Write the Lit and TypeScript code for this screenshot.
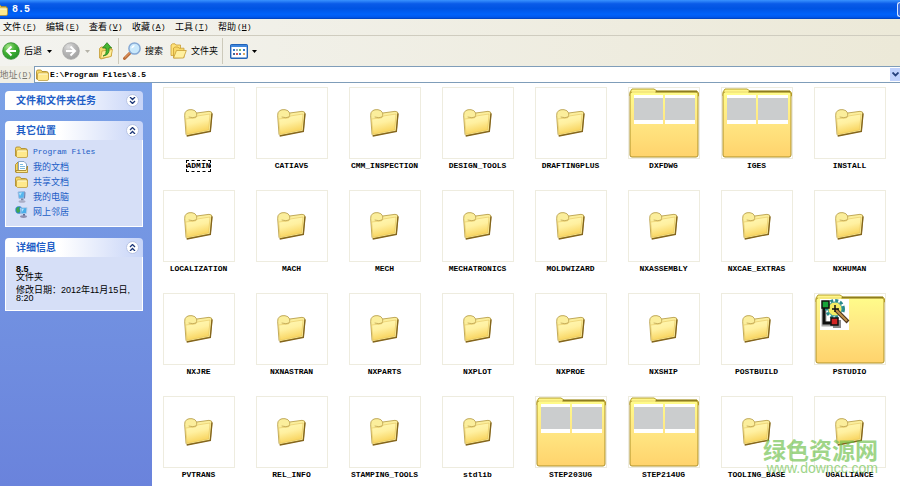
import { LitElement, html, css, svg, nothing } from "lit";
import { customElement, property } from "lit/decorators.js";

type Kind = "plain" | "preview" | "studio";
interface Folder { name: string; kind?: Kind; selected?: boolean }

const FOLDERS: Folder[] = [
  { name: "ADMIN", selected: true }, { name: "CATIAV5" }, { name: "CMM_INSPECTION" }, { name: "DESIGN_TOOLS" },
  { name: "DRAFTINGPLUS" }, { name: "DXFDWG", kind: "preview" }, { name: "IGES", kind: "preview" }, { name: "INSTALL" },
  { name: "LOCALIZATION" }, { name: "MACH" }, { name: "MECH" }, { name: "MECHATRONICS" },
  { name: "MOLDWIZARD" }, { name: "NXASSEMBLY" }, { name: "NXCAE_EXTRAS" }, { name: "NXHUMAN" },
  { name: "NXJRE" }, { name: "NXNASTRAN" }, { name: "NXPARTS" }, { name: "NXPLOT" },
  { name: "NXPROE" }, { name: "NXSHIP" }, { name: "POSTBUILD" }, { name: "PSTUDIO", kind: "studio" },
  { name: "PVTRANS" }, { name: "REL_INFO" }, { name: "STAMPING_TOOLS" }, { name: "stdlib" },
  { name: "STEP203UG", kind: "preview" }, { name: "STEP214UG", kind: "preview" }, { name: "TOOLING_BASE" }, { name: "UGALLIANCE" },
];

const MENUS = [["文件", "F"], ["编辑", "E"], ["查看", "V"], ["收藏", "A"], ["工具", "T"], ["帮助", "H"]];

const smallFolder = html`<svg width="13" height="12" viewBox="0 0 13 12" aria-hidden="true">
  <path d="M.5 10V2.5Q.5 1 2 1H4.500Q5.500 1 6 2.500H10.500Q12 2.500 12 4V10.500H1.500Z" fill="#f4d766" stroke="#a88420" stroke-width=".8"/>
  <path d="M1.500 10.500V5Q1.500 4 3 4H12.500V10Q12.500 11.500 11 11.500H2.500Z" fill="#ffe98c" stroke="#b8922c" stroke-width=".7"/>
  <path d="M2.500 5H11.500" stroke="#fffbd8"/></svg>`;

const docsIcon = html`<svg width="13" height="12" viewBox="0 0 13 12" aria-hidden="true">
  <path d="M.5 11V3.500L3 1V11Z" fill="#f4d766" stroke="#a88420" stroke-width=".8"/>
  <path d="M3.500.5H9L11.500 3V9.500H3.500Z" fill="#fff" stroke="#6d93bd" stroke-width=".8"/>
  <path d="M5 3.500H8M5 5.500H10M5 7.500H10" stroke="#6fb2dd" stroke-width=".9"/>
  <path d="M1 11.500V9.500H11L12.500 5V11.500Z" fill="#ffe98c" stroke="#a88420" stroke-width=".8"/></svg>`;

const computerIcon = html`<svg width="13" height="12" viewBox="0 0 13 12" aria-hidden="true">
  <path d="M3 1L9.500.5L9 7L4 7.500Z" fill="#54b6ef" stroke="#9fb7dc" stroke-width=".9"/>
  <path d="M4 2L7 1.500L5 5Z" fill="#b4e4fc"/>
  <path d="M9.500.5L10.500 1.500L10 8L9 7Z" fill="#6a7fae"/>
  <path d="M6 7.500H8.500V9.500H6Z" fill="#7e88a8"/><ellipse cx="7" cy="10.500" rx="3.500" ry="1.300" fill="#a9adc6"/></svg>`;

const networkIcon = html`<svg width="13" height="12" viewBox="0 0 13 12" aria-hidden="true">
  <circle cx="4" cy="4" r="3.700" fill="#2f86d4"/><path d="M1 3Q2 .5 5 .8L4 3L5.500 5L3 7Q1 6 1 3Z" fill="#3fa653"/>
  <path d="M5.500 2L12 1.500L11.500 7.500L6 8Z" fill="#4aaeea" stroke="#b8cce8" stroke-width=".9"/>
  <path d="M6.500 3L9 2.700L7 6Z" fill="#b4e4fc"/><path d="M8 8H10V10H8Z" fill="#5f6c99"/>
  <ellipse cx="8.500" cy="10.600" rx="3.500" ry="1.300" fill="#8d8fb0"/></svg>`;

const arrow = (dir: "left" | "right") => {
  const left = dir === "left";
  const id = `orb-${dir}`;
  return html`<svg width="18" height="18" viewBox="0 0 18 18" aria-hidden="true">
    <defs><radialGradient id=${id} cx=".35" cy=".25" r=".8">
      <stop offset="0" stop-color=${left ? "#a5e58c" : "#dedede"}/><stop offset=".5" stop-color=${left ? "#43b134" : "#b6b6b6"}/>
      <stop offset="1" stop-color=${left ? "#22902a" : "#a0a0a0"}/></radialGradient></defs>
    <circle cx="9" cy="9" r="8.300" fill="url(#${id})" stroke=${left ? "#2b8a29" : "#a4a4a4"} stroke-width=".8"/>
    <path d=${left ? "M14 9H5M9.500 4.500L5 9L9.500 13.500" : "M4 9H13M8.500 4.500L13 9L8.500 13.500"} fill="none" stroke="#fff" stroke-width="2"/></svg>`;
};

const upIcon = html`<svg width="16" height="18" viewBox="0 0 16 18" aria-hidden="true">
  <path d="M1.500 16V6.500L3 5H6L7 6.500L13.500 5.500V14L3 17Z" fill="#f5d568" stroke="#c39a34" stroke-width=".8"/>
  <path d="M2.500 16.500L4 9L14.500 7.500L13 14.500Z" fill="#ffee9a" stroke="#c9a13a" stroke-width=".8"/>
  <path d="M5 14Q9 13 8 6H4.500L9 .7L13.500 6H11Q12 13 5 14Z" fill="#46b733" stroke="#23801c" stroke-width=".8"/></svg>`;

const searchIcon = html`<svg width="18" height="18" viewBox="0 0 18 18" aria-hidden="true">
  <path d="M7.500 10.500L1.500 16.500" stroke="#b96a35" stroke-width="3" stroke-linecap="round"/>
  <path d="M7 10.500L1.800 15.700" stroke="#f0a870" stroke-width="1"/>
  <circle cx="11.500" cy="6.500" r="5.600" fill="#c9e8fb" stroke="#86a9d4" stroke-width="1.500"/>
  <path d="M8.300 6.500Q8.500 3.500 11.500 3Q12 5 8.300 6.500Z" fill="#fff"/></svg>`;

const foldersIcon = html`<svg width="17" height="16" viewBox="0 0 17 16" aria-hidden="true">
  <path d="M1 12.500V2L2.500.8H5L6 2H10.500V12Z" fill="#ffe27a" stroke="#c99e35" stroke-width=".8"/>
  <path d="M3.500 15V5L5 4H8L9 5.200H14V14.500Z" fill="#f8d868" stroke="#c99e35" stroke-width=".8"/>
  <path d="M3.500 15L6.500 7.500H16.300L13.500 15Z" fill="#fff0a0" stroke="#c99e35" stroke-width=".8"/></svg>`;

const viewsIcon = html`<svg width="18" height="15" viewBox="0 0 18 15" aria-hidden="true">
  <rect x=".7" y=".7" width="16.600" height="13.600" rx="1" fill="#fff" stroke="#2163b8" stroke-width="1.400"/>
  <rect x="1" y="1" width="16" height="2" fill="#3f86dc"/>
  <g fill="#3a7bc8"><rect x="3" y="5" width="2" height="2"/><rect x="6" y="5" width="2" height="2" fill="#9ab"/><rect x="9" y="5" width="2" height="2" fill="#7b6"/><rect x="13" y="5" width="2" height="2"/>
  <rect x="3" y="9" width="2" height="2" fill="#469"/><rect x="6" y="9" width="2" height="2" fill="#c55"/><rect x="9" y="9" width="2" height="2"/><rect x="13" y="9" width="2" height="2" fill="#da6"/></g></svg>`;

const caret = html`<svg width="5" height="3" viewBox="0 0 5 3" aria-hidden="true"><path d="M0 0H5L2.500 3Z" fill="currentColor"/></svg>`;

const plainFolder = html`<svg class="plain" width="29" height="28" viewBox="0 0 87 84" aria-hidden="true">
  <defs><linearGradient id="front" x1="0" y1="0" x2=".3" y2="1"><stop offset="0" stop-color="#fffab8"/><stop offset=".5" stop-color="#fff0a0"/><stop offset="1" stop-color="#f8d35c"/></linearGradient></defs>
  <path d="M6 76L2 20Q1 10 8 5Q14 1 24 2Q34 3 38 12L75 7Q85 7 84 15L79 66L10 80Z" fill="#fbee9c" stroke="#b59a44" stroke-width="2.500"/>
  <path d="M84 13L79 67L8 81" fill="none" stroke="#84651c" stroke-width="4"/>
  <path d="M5 30Q20 28 29 28Q38 27 40 21L78 15L74 63L9 76Z" fill="url(#front)" stroke="#e0bd55" stroke-width="1.500"/>
  <path d="M14 24Q28 28 36 24Q39 20 38 12" fill="none" stroke="#b0913c" stroke-width="2"/></svg>`;

const previews = svg`<path d="M5 7H34V36H5ZM36 7H66V36H36Z" fill="#fff"/><path d="M5 10H34V32H5ZM36 10H66V32H36Z" fill="#cbcdce"/>`;

const studioMark = svg`<rect x="5" y="5" width="29" height="31" fill="#fff"/>
  <path d="M9 14V30H18" fill="none" stroke="#aaa" stroke-width="5"/>
  <path d="M9 13V29H17" fill="none" stroke="#111" stroke-width="3"/>
  <circle cx="20" cy="15" r="8.500" fill="none" stroke="#29898b" stroke-width="3" stroke-dasharray="3 2"/>
  <circle cx="20" cy="15" r="7" fill="#f4ec63" stroke="#3c9b98"/>
  <rect x="7" y="7" width="7" height="7" fill="#16a43a" stroke="#111" stroke-width="1.500"/>
  <rect x="18" y="26" width="8" height="8" fill="#888"/><rect x="16" y="24" width="7" height="7" fill="#d22424" stroke="#111" stroke-width="1.500"/>
  <path d="M21 16L33 28" stroke="#4f361b" stroke-width="4"/><path d="M21 16L32 27" stroke="#c0924c" stroke-width="2"/>
  <path d="M17 15H24M20 11V18" stroke="#111" stroke-width="1.500"/>`;

const largeFolder = (kind: Kind) => html`<svg class="large" width="70" height="70" viewBox="0 0 70 70" aria-hidden="true">
  <defs><linearGradient id="body" x1="0" y1="0" x2="0" y2="1"><stop offset="0" stop-color="#fffc8a"/><stop offset=".45" stop-color="#ffe784"/><stop offset="1" stop-color="#ffd36c"/></linearGradient></defs>
  <path d="M1 8V4L3 1H25L28 3H68L69.500 5V8Z" fill="#fff58a" stroke="#b6a22c"/>
  <path d="M1 6Q1 4 3 4H67Q69 4 69 6V67Q69 69 67 69H3Q1 69 1 67Z" fill="url(#body)" stroke="#ad9128"/>
  <path d="M3 4H26" stroke="#fff58a" stroke-width="1.500"/>
  <path d="M27 3.500H68" stroke="#8d7d20" stroke-width="1.500"/>
  ${kind === "preview" ? previews : studioMark}</svg>`;

@customElement("folder-tile")
class FolderTile extends LitElement {
  @property() name = "";
  @property() kind: Kind = "plain";
  @property({ type: Boolean }) selected = false;

  static styles = css`
    :host { display: block; }
    .tile { display: flex; flex-direction: column; align-items: center; gap: 1px; width: 100%; padding: 0; border: 0; background: none; color: #000; font: 8px/12px "Liberation Mono", monospace; }
    .thumb { box-sizing: border-box; display: flex; align-items: center; justify-content: center; width: 72px; height: 72px; border: 1px solid #eeecdf; background: #fff; }
    svg { display: block; }
    .large { flex: none; }
    .name { white-space: nowrap; font-weight: 700; }
    .selected { outline: 1px dashed #000; outline-offset: -1px; }
  `;

  render() {
    return html`<button class="tile">
      <span class="thumb">${this.kind === "plain" ? plainFolder : largeFolder(this.kind)}</span>
      <span class="name ${this.selected ? "selected" : ""}">${this.name}</span>
    </button>`;
  }
}

@customElement("task-panel")
class TaskPanel extends LitElement {
  @property() heading = "";
  @property({ type: Boolean }) collapsed = false;

  static styles = css`
    :host { display: block; }
    .head { display: flex; align-items: center; justify-content: space-between; height: 19px; padding: 0 4px 0 11px; border-radius: 4px 4px 0 0; background: linear-gradient(90deg, #fff 40%, #c7d4f7); }
    h2 { margin: 0; color: #215dc6; font: 700 10px/19px "Liberation Sans", "Noto Sans CJK SC", sans-serif; }
    .toggle { display: grid; place-items: center; width: 13px; height: 13px; padding: 0; border: 1px solid #b8c4e4; border-radius: 50%; background: #fff; }
    .body { border: 1px solid #fff; border-top: 0; background: #d6dff7; }
  `;

  render() {
    const d = this.collapsed ? "M1 0L3.500 2.500L6 0M1 4L3.500 6.500L6 4" : "M1 3L3.500 .5L6 3M1 7L3.500 4.500L6 7";
    return html`<section>
      <div class="head"><h2>${this.heading}</h2>
        <button class="toggle" aria-label=${this.collapsed ? "展开" : "折叠"}>
          <svg width="7" height="7" viewBox="0 0 7 7"><path d=${d} fill="none" stroke="#1c3677" stroke-width="1.300"/></svg>
        </button></div>
      ${this.collapsed ? nothing : html`<div class="body"><slot></slot></div>`}
    </section>`;
  }
}

@customElement("app-root")
class AppRoot extends LitElement {
  static styles = css`
    :host { display: flex; flex-direction: column; position: relative; min-height: 100vh; overflow: hidden; background: #fff; color: #000; font: 9px/12px "Liberation Sans", "Noto Sans CJK SC", sans-serif; }
    button { display: flex; align-items: center; padding: 0; border: 0; background: none; color: inherit; font: inherit; white-space: nowrap; }
    svg { display: block; flex: none; }
    .title { display: flex; align-items: center; gap: 4px; height: 19px; overflow: hidden; background: linear-gradient(#3a93ff, #0a5be8 20%, #0054e3 45%, #0062fa 75%, #0058ee 90%, #0040b8); color: #fff; }
    .title svg { margin-left: -5px; }
    .title h1 { flex: 1; margin: 0; font: 700 10px/16px "Liberation Mono", monospace; }
    .window-button { width: 3px; height: 15px; border: 1px solid #dbe8ff; border-right: 0; border-radius: 3px 0 0 3px; background: #3c6fe0; box-sizing: border-box; }
    .menu { display: flex; height: 16px; padding-left: 3px; border-bottom: 1px solid #cfccbf; background: linear-gradient(90deg, #f3f3ef, #ece9d8); }
    .menu button { width: 43px; gap: 1px; }
    .key { font: 8px/12px "Liberation Mono", monospace; }
    .tools { display: flex; align-items: center; height: 30px; padding-left: 2px; background: linear-gradient(90deg, #f3f3ef, #ece9d8); }
    .tools button { gap: 4px; }
    .drop { justify-content: center; width: 14px; height: 18px; }
    .muted { color: #b5b3a8; }
    .forward { margin-left: 6px; }
    .up { margin-left: 4px; }
    .rule { width: 1px; height: 26px; margin: 0 4px; background: #cdcabb; }
    .folders { margin-left: 7px; }
    .views { margin-left: 3px; }
    .address { display: flex; align-items: center; height: 17px; background: #f0efe6; }
    .address label { box-sizing: border-box; display: flex; width: 34px; padding-right: 2px; justify-content: flex-end; color: #77766d; white-space: nowrap; overflow: hidden; }
    .field { box-sizing: border-box; display: flex; flex: 1; align-items: center; gap: 1px; height: 17px; padding-left: 1px; border: 1px solid #7f9db9; border-right: 0; background: #fff; }
    .field input { flex: 1; min-width: 0; padding: 0; border: 0; outline: 0; background: none; color: #000; font: 700 8px/12px "Liberation Mono", monospace; }
    .field button { justify-content: center; width: 10px; height: 13px; background: #c1d2fc; color: #26417c; }
    .main { display: flex; flex: 1; }
    .side { box-sizing: border-box; display: flex; flex-direction: column; gap: 11px; flex: none; width: 152px; padding: 8px 9px 8px 5px; background: linear-gradient(#7ba2e7, #6a83dc); }
    .places { display: flex; flex-direction: column; margin: 0; padding: 4px 0 7px 9px; list-style: none; }
    .places a { display: flex; align-items: center; gap: 5px; height: 15px; color: #215dc6; text-decoration: none; }
    .latin { font: 8px/12px "Liberation Mono", monospace; }
    .details { padding: 8px 4px 8px 10px; line-height: 8px; }
    .details p { margin: 0 0 5px; white-space: nowrap; }
    .details p:last-child { margin: 0; }
    .files { flex: 1; min-width: 0; display: grid; grid-template-columns: repeat(auto-fill, 93px); grid-auto-rows: 86px; row-gap: 17px; align-content: start; padding-top: 4px; background: #fff; }
    .mark { position: absolute; right: 22px; bottom: 11px; display: flex; flex-direction: column; align-items: flex-end; color: #6cc04a; opacity: .65; pointer-events: none; }
    .mark strong { font: 700 23px/24px "Noto Sans CJK SC", sans-serif; }
    .mark span { font: 14px/14px "Liberation Sans", sans-serif; }
  `;

  render() {
    const places = [
      [smallFolder, "Program Files", "latin"], [docsIcon, "我的文档", ""], [smallFolder, "共享文档", ""],
      [computerIcon, "我的电脑", ""], [networkIcon, "网上邻居", ""],
    ];
    return html`
      <header class="title">${smallFolder}<h1>8.5</h1><button class="window-button" aria-label="最小化"></button></header>
      <nav class="menu">${MENUS.map(([t, k]) => html`<button>${t}<span class="key">(<u>${k}</u>)</span></button>`)}</nav>
      <div class="tools">
        <button>${arrow("left")}后退</button><button class="drop" aria-label="后退列表">${caret}</button>
        <button class="forward" aria-label="前进">${arrow("right")}</button><button class="drop muted" aria-label="前进列表">${caret}</button>
        <button class="up" aria-label="向上">${upIcon}</button>
        <span class="rule"></span>
        <button>${searchIcon}搜索</button>
        <button class="folders">${foldersIcon}文件夹</button>
        <span class="rule"></span>
        <button class="views" aria-label="查看">${viewsIcon}${caret}</button>
      </div>
      <div class="address"><label for="path">地址<span class="key">(<u>D</u>)</span></label>
        <div class="field">${smallFolder}<input id="path" value="E:\\Program Files\\8.5">
          <button aria-label="地址列表"><svg width="7" height="5" viewBox="0 0 7 5"><path d="M.5.5L3.500 3.500L6.500.5" fill="none" stroke="currentColor" stroke-width="1.800"/></svg></button></div>
      </div>
      <div class="main">
        <aside class="side">
          <task-panel heading="文件和文件夹任务" collapsed></task-panel>
          <task-panel heading="其它位置"><ul class="places">
            ${places.map(([icon, text, cls]) => html`<li><a href="#">${icon}<span class=${cls}>${text}</span></a></li>`)}
          </ul></task-panel>
          <task-panel heading="详细信息"><div class="details">
            <p><b>8.5</b><br>文件夹</p><p>修改日期：2012年11月15日,<br>8:20</p>
          </div></task-panel>
        </aside>
        <main class="files">
          ${FOLDERS.map(f => html`<folder-tile .name=${f.name} .kind=${f.kind ?? "plain"} ?selected=${f.selected}></folder-tile>`)}
        </main>
      </div>
      <div class="mark"><strong>绿色资源网</strong><span>www.downcc.com</span></div>`;
  }
}
